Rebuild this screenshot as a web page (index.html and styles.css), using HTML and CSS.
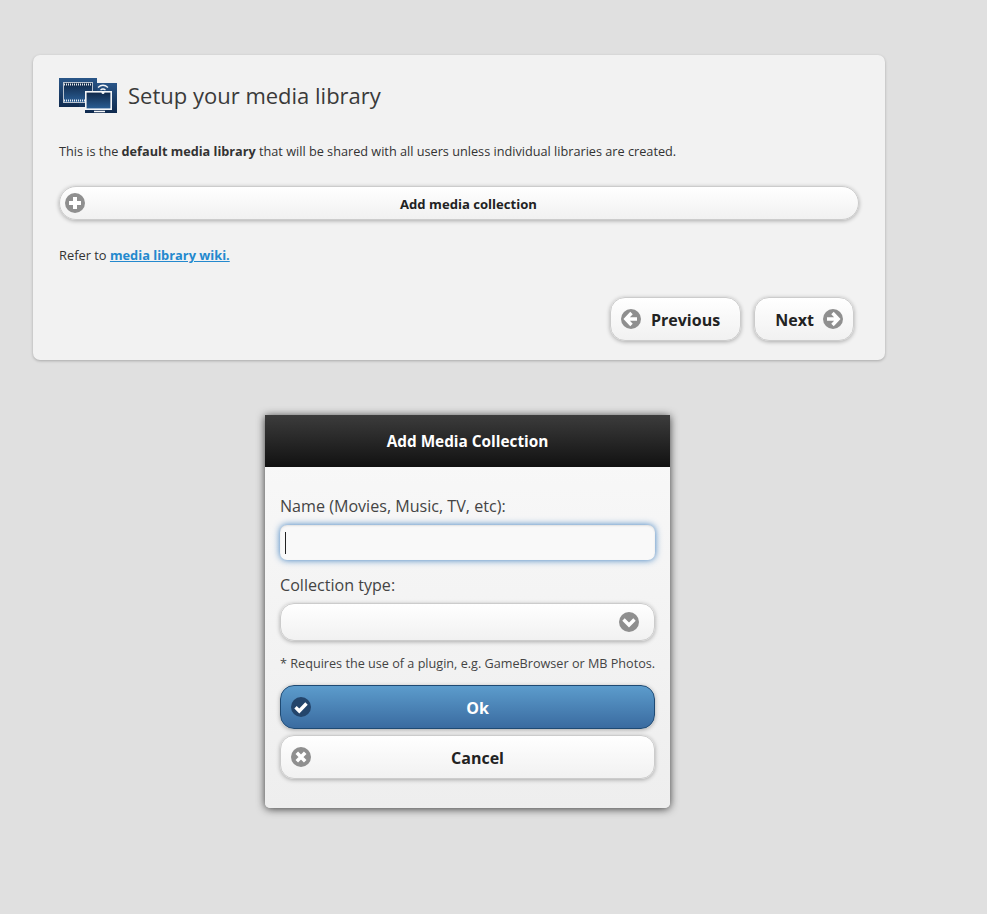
FILE: index.html
```html
<!DOCTYPE html>
<html>
<head>
<link rel="stylesheet" href="styles.css">
</head>

<body>

<!-- Wizard page -->
<div class="card">
  <div class="cardTitle">
    <svg class="logo" width="58" height="35" viewBox="0 0 58 35">
      <defs>
        <linearGradient id="panel" x1="0" y1="0" x2="0" y2="1">
          <stop offset="0" stop-color="#2a5688"/>
          <stop offset="1" stop-color="#0f2a4e"/>
        </linearGradient>
        <linearGradient id="screen" x1="0" y1="0" x2="0" y2="1">
          <stop offset="0" stop-color="#0f2747"/>
          <stop offset="1" stop-color="#2b5f96"/>
        </linearGradient>
      </defs>
      <rect x="0" y="0" width="38" height="29" fill="url(#panel)"/>
      <path d="M38 5h20v30H26v-6h-6v-5h18z" fill="url(#panel)"/>
      <rect x="4.500" y="4.500" width="29" height="20" fill="url(#screen)" stroke="#b9c3cf"/>
      <path d="M5 6.500h28M5 22.500h28" stroke="#e8ecf0" stroke-width="2" stroke-dasharray="1 1"/>
      <rect x="26" y="13" width="27" height="19" fill="#17365f"/>
      <rect x="26.800" y="13.800" width="25.400" height="17.400" fill="url(#screen)" stroke="#f4f6f8" stroke-width="1.600"/>
      <path d="M35 33.500h11" stroke="#f4f6f8" stroke-width="1.500"/>
      <path d="M39 9.500q5-4.500 10 0M41.500 12q2.500-2 5 0" stroke="#f4f6f8" stroke-width="1.300" fill="none"/>
      <circle cx="44" cy="14.500" r="1.500" fill="#f4f6f8"/>
    </svg>
    <h1>Setup your media library</h1>
  </div>

  <p class="intro">This is the <b>default media library</b> that will be shared with all users unless individual libraries are created.</p>

  <div class="btn wideBtn">
    <svg class="icon" width="20" height="20" viewBox="0 0 20 20">
      <circle cx="10" cy="10" r="10" fill="#8f8f8f"/>
      <path d="M10 4v12M4 10h12" stroke="#fff" stroke-width="4"/>
    </svg>
    <span class="btnText">Add media collection</span>
  </div>

  <p class="refer">Refer to <a href="#">media library wiki.</a></p>

  <div class="navBtns">
    <div class="btn navBtn prevBtn">
      <svg width="20" height="20" viewBox="0 0 20 20">
        <circle cx="10" cy="10" r="10" fill="#8f8f8f"/>
        <path d="M10.500 4 4.800 10l5.700 6M5.500 10h10.500" stroke="#fff" stroke-width="3.400" fill="none"/>
      </svg>
      <span class="btnText">Previous</span>
    </div>
    <div class="btn navBtn nextBtn">
      <span class="btnText">Next</span>
      <svg width="20" height="20" viewBox="0 0 20 20">
        <circle cx="10" cy="10" r="10" fill="#8f8f8f"/>
        <path d="M9.500 4 15.200 10l-5.700 6M14.500 10H4" stroke="#fff" stroke-width="3.400" fill="none"/>
      </svg>
    </div>
  </div>
</div>

<!-- Add collection popup -->
<div class="dialog">
  <div class="dialogHead">Add Media Collection</div>
  <div class="dialogBody">
    <label class="fieldLabel">Name (Movies, Music, TV, etc):</label>
    <div class="nameInput"><span class="caret"></span></div>

    <label class="fieldLabel typeLabel">Collection type:</label>
    <div class="btn typeSelect">
      <svg width="20" height="20" viewBox="0 0 20 20">
        <circle cx="10" cy="10" r="10" fill="#8f8f8f"/>
        <path d="M4.500 7.500 10 13l5.500-5.500" stroke="#fff" stroke-width="3.400" fill="none"/>
      </svg>
    </div>

    <p class="note">* Requires the use of a plugin, e.g. GameBrowser or MB Photos.</p>

    <div class="btn formBtn okBtn">
      <svg class="icon" width="20" height="20" viewBox="0 0 20 20">
        <circle cx="10" cy="10" r="10" fill="#24456b"/>
        <path d="M4.500 10.200 8.300 14 15.500 6.500" stroke="#fff" stroke-width="3.400" fill="none"/>
      </svg>
      <span class="btnText">Ok</span>
    </div>
    <div class="btn formBtn">
      <svg class="icon" width="20" height="20" viewBox="0 0 20 20">
        <circle cx="10" cy="10" r="10" fill="#8f8f8f"/>
        <path d="M5.800 5.800l8.400 8.400M14.200 5.800l-8.400 8.400" stroke="#fff" stroke-width="3.600"/>
      </svg>
      <span class="btnText">Cancel</span>
    </div>
  </div>
</div>

</body>
</html>
```

FILE: styles.css
```css
body {
  margin: 0;
  height: 914px;
  overflow: hidden;
  background: #e0e0e0;
  font-family: "Open Sans", sans-serif;
  color: #333;
}

.card {
  box-sizing: border-box;
  width: 852px;
  height: 305px;
  margin: 55px 0 0 33px;
  padding: 23px 26px 0;
  background: #f2f2f2;
  border-radius: 7px;
  box-shadow: 0 1px 3px rgba(0, 0, 0, 0.25);
}

.cardTitle {
  display: flex;
  align-items: center;
  gap: 11px;
  height: 35px;
}

.cardTitle h1 {
  margin: 0 0 2px;
  font-size: 22px;
  font-weight: 400;
  color: #3a3a3a;
}

.intro {
  margin: 28px 0 0;
  font-size: 12.700px;
  line-height: 20px;
}

/* Shared glossy button */
.btn {
  display: flex;
  align-items: center;
  justify-content: center;
  position: relative;
  box-sizing: border-box;
  border: 1px solid #ccc;
  background: linear-gradient(#ffffff, #f1f1f1);
  box-shadow: 0 1px 4px rgba(0, 0, 0, 0.3);
  color: #222;
  font-weight: 700;
}

.btnText {
  padding-top: 2px;
}

.icon {
  position: absolute;
  left: 5px;
  top: 50%;
  margin-top: -10px;
}

.wideBtn {
  width: 800px;
  height: 34px;
  margin-top: 25px;
  padding-left: 19px;
  border-radius: 17px;
  font-size: 13.100px;
}

.refer {
  margin: 25px 0 0;
  font-size: 12.850px;
  line-height: 20px;
}

.refer a {
  color: #2489ce;
  font-weight: 700;
}

.navBtns {
  display: flex;
  justify-content: flex-end;
  gap: 13px;
  margin: 32px 5px 0 0;
}

.navBtn {
  gap: 10px;
  height: 44px;
  padding: 0 10px;
  border-radius: 15px;
  font-size: 16px;
}

.prevBtn {
  justify-content: flex-start;
  width: 131px;
}

.nextBtn {
  gap: 9px;
  justify-content: flex-end;
  width: 100px;
}

/* Popup */
.dialog {
  width: 405px;
  height: 393px;
  margin: 55px 0 0 265px;
  background: linear-gradient(#f9f9f9, #eeeeee);
  border-radius: 0 0 5px 5px;
  box-shadow: 0 1px 9px rgba(0, 0, 0, 0.75);
}

.dialogHead {
  height: 52px;
  line-height: 52px;
  text-align: center;
  background: linear-gradient(#3c3c3c, #111111);
  color: #fff;
  font-size: 15.350px;
  font-weight: 700;
}

.dialogBody {
  padding: 27px 15px 0;
}

.fieldLabel {
  display: block;
  font-size: 16.100px;
  line-height: 24px;
  color: #444;
}

.nameInput {
  display: flex;
  align-items: center;
  box-sizing: border-box;
  height: 35px;
  margin-top: 7px;
  padding-left: 5px;
  background: #f9f9f9;
  border-radius: 7px;
  box-shadow: 0 0 7px #387bbe, inset 0 1px 2px rgba(0, 0, 0, 0.1);
}

.caret {
  width: 1px;
  height: 22px;
  background: #222;
}

.typeLabel {
  margin-top: 13px;
}

.typeSelect {
  justify-content: flex-end;
  height: 38px;
  margin-top: 6px;
  padding-right: 15px;
  border-radius: 14px;
}

.note {
  margin: 12px 0 0;
  font-size: 12.650px;
  line-height: 20px;
  white-space: nowrap;
  color: #444;
}

.formBtn {
  height: 44px;
  margin-top: 7px;
  padding-left: 20px;
  border-radius: 14px;
  font-size: 16px;
}

.formBtn .icon {
  left: 10px;
}

.okBtn {
  margin-top: 12px;
  margin-bottom: -1px;
  border-color: #1f4a73;
  background: linear-gradient(#5c9ccc, #3a6ba0);
  color: #fff;
}
```
